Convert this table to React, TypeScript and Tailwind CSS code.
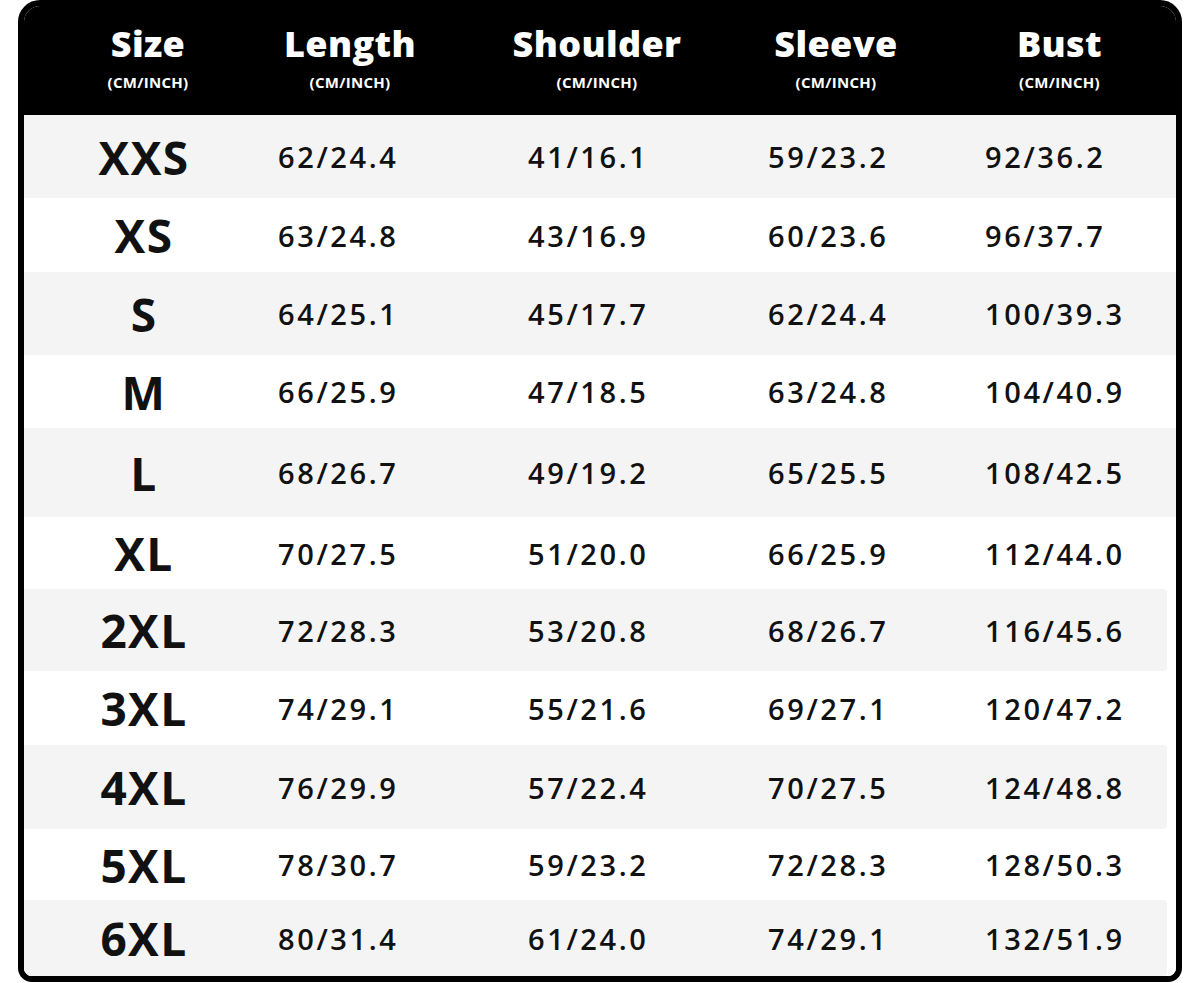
const columns = ["Size", "Length", "Shoulder", "Sleeve", "Bust"];

const rows = [
  { size: "XXS", h: "h-[83px]", gray: true, values: ["62/24.4", "41/16.1", "59/23.2", "92/36.2"] },
  { size: "XS", h: "h-[74px]", gray: false, values: ["63/24.8", "43/16.9", "60/23.6", "96/37.7"] },
  { size: "S", h: "h-[83px]", gray: true, values: ["64/25.1", "45/17.7", "62/24.4", "100/39.3"] },
  { size: "M", h: "h-[73px]", gray: false, values: ["66/25.9", "47/18.5", "63/24.8", "104/40.9"] },
  { size: "L", h: "h-[89px]", gray: true, values: ["68/26.7", "49/19.2", "65/25.5", "108/42.5"] },
  { size: "XL", h: "h-[72px]", gray: false, values: ["70/27.5", "51/20.0", "66/25.9", "112/44.0"] },
  { size: "2XL", h: "h-[82px]", gray: true, short: true, values: ["72/28.3", "53/20.8", "68/26.7", "116/45.6"] },
  { size: "3XL", h: "h-[74px]", gray: false, values: ["74/29.1", "55/21.6", "69/27.1", "120/47.2"] },
  { size: "4XL", h: "h-[84px]", gray: true, short: true, values: ["76/29.9", "57/22.4", "70/27.5", "124/48.8"] },
  { size: "5XL", h: "h-[71px]", gray: false, values: ["78/30.7", "59/23.2", "72/28.3", "128/50.3"] },
  { size: "6XL", h: "h-[76px]", gray: true, short: true, values: ["80/31.4", "61/24.0", "74/29.1", "132/51.9"] },
];

// left offset of the value text inside each data column
const valuePad = ["pl-[6px]", "pl-[100px]", "pl-[2px]", "pl-[79px]"];

const grid = "grid grid-cols-[248px_156px_338px_140px_1fr]";

export default function App() {
  return (
    <div className="min-h-screen bg-white font-['Open_Sans','Noto_Sans',sans-serif] text-[#111]">
      <div className="ml-[18px] h-[982px] w-[1164px] overflow-hidden rounded-t-[22px] rounded-b-[14px] border-[6px] border-black bg-white">
        <div className={`${grid} h-[109px] bg-black pt-[20px] text-white`}>
          {columns.map((c, i) => (
            <div key={c} className={`flex flex-col items-center ${i === 4 ? "pl-[37px]" : ""}`}>
              <span className="text-[36px] font-extrabold leading-none tracking-[0.01em]">{c}</span>
              <span className="mt-[13px] text-[15px] font-bold leading-none tracking-[0.02em]">(CM/INCH)</span>
            </div>
          ))}
        </div>

        {rows.map((r) => (
          <div key={r.size} className={`${r.h} bg-white`}>
            <div
              className={`${grid} h-full items-center ${r.gray ? "bg-[#f4f4f4]" : "bg-white"} ${
                r.short ? "mr-[9px] rounded-r-[4px]" : ""
              }`}
            >
              <div className="pr-[8px] text-center text-[46px] font-bold leading-none tracking-[0.03em]">
                {r.size}
              </div>
              {r.values.map((v, i) => (
                <div key={i} className={`${valuePad[i]} text-[29px] font-semibold leading-none tracking-[0.09em]`}>
                  {v}
                </div>
              ))}
            </div>
          </div>
        ))}
      </div>
    </div>
  );
}
